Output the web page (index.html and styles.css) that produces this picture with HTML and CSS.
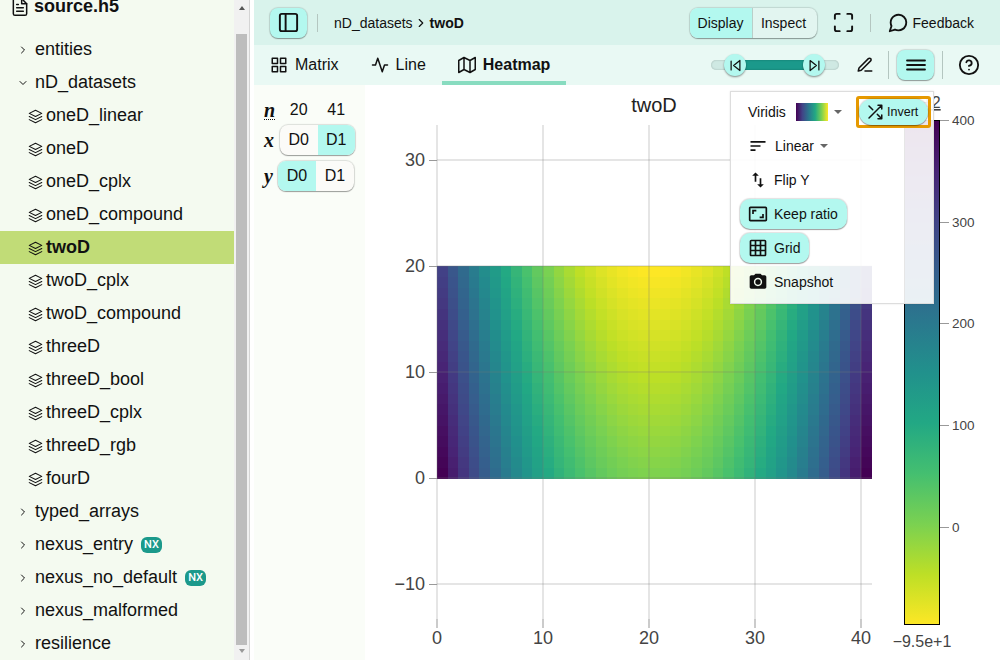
FILE: index.html
```html
<!DOCTYPE html>
<html lang="en">
<head>
    <meta charset="UTF-8">
    <title>twoD - H5Web</title>
    <link rel="stylesheet" href="styles.css">
</head>
<body>
    <!-- Icon set, reused below with <use> -->
    <svg class="icon-defs" aria-hidden="true">
        <symbol id="i-file" viewBox="0 0 24 24"><path d="M14 2H6a2 2 0 0 0-2 2v16a2 2 0 0 0 2 2h12a2 2 0 0 0 2-2V8z"/><path d="M14 2v6h6M16 13H8M16 17H8M10 9H8"/></symbol>
        <symbol id="i-right" viewBox="0 0 24 24"><path d="M9 18l6-6-6-6"/></symbol>
        <symbol id="i-down" viewBox="0 0 24 24"><path d="M6 9l6 6 6-6"/></symbol>
        <symbol id="i-layers" viewBox="0 0 24 24"><path d="M12 2L2 7l10 5 10-5-10-5zM2 17l10 5 10-5M2 12l10 5 10-5"/></symbol>
        <symbol id="i-sidebar" viewBox="0 0 24 24"><rect x="3" y="3" width="18" height="18" rx="2"/><path d="M9 3v18"/></symbol>
        <symbol id="i-grid" viewBox="0 0 24 24"><path d="M3 3h7v7H3zM14 3h7v7h-7zM14 14h7v7h-7zM3 14h7v7H3z"/></symbol>
        <symbol id="i-line" viewBox="0 0 24 24"><path d="M22 12h-4l-3 9-6-18-3 9H2"/></symbol>
        <symbol id="i-map" viewBox="0 0 24 24"><path d="M1 6v16l7-4 8 4 7-4V2l-7 4-8-4-7 4zM8 2v16M16 6v16"/></symbol>
        <symbol id="i-maximize" viewBox="0 0 24 24"><path d="M8 3H5a2 2 0 0 0-2 2v3m18 0V5a2 2 0 0 0-2-2h-3m0 18h3a2 2 0 0 0 2-2v-3M3 16v3a2 2 0 0 0 2 2h3"/></symbol>
        <symbol id="i-message" viewBox="0 0 24 24"><path d="M21 11.5a8.38 8.38 0 0 1-.9 3.8 8.5 8.5 0 0 1-7.6 4.7 8.38 8.38 0 0 1-3.8-.9L3 21l1.9-5.7a8.38 8.38 0 0 1-.9-3.8 8.5 8.5 0 0 1 4.7-7.6 8.38 8.38 0 0 1 3.8-.9h.5a8.48 8.48 0 0 1 8 8v.5z"/></symbol>
        <symbol id="i-back" viewBox="0 0 24 24"><path d="M19 20L9 12l10-8v16zM5 19V5"/></symbol>
        <symbol id="i-forward" viewBox="0 0 24 24"><path d="M5 4l10 8-10 8V4zM19 5v14"/></symbol>
        <symbol id="i-pen" viewBox="0 0 24 24"><path d="M12 20h9M16.5 3.5a2.121 2.121 0 0 1 3 3L7 19l-4 1 1-4L16.5 3.5z"/></symbol>
        <symbol id="i-menu" viewBox="0 0 24 24"><path d="M2.2 7.1h19.6M2.2 12h19.6M2.2 16.9h19.6"/></symbol>
        <symbol id="i-help" viewBox="0 0 24 24"><circle cx="12" cy="12" r="10"/><path d="M9.09 9a3 3 0 0 1 5.83 1c0 2-3 3-3 3M12 17h.01"/></symbol>
        <symbol id="i-shuffle" viewBox="0 0 24 24"><path d="M16 3h5v5M4 20L21 3M21 16v5h-5M15 15l6 6M4 4l5 5"/></symbol>
        <symbol id="i-sort" viewBox="0 0 24 24"><path class="solid" d="M3 18h6v-2H3v2zM3 6v2h18V6H3zm0 7h12v-2H3v2z"/></symbol>
        <symbol id="i-swap" viewBox="0 0 24 24"><path class="solid" d="M16 17.01V10h-2v7.01h-3L15 21l4-3.99h-3zM9 3L5 6.99h3V14h2V6.99h3L9 3z"/></symbol>
        <symbol id="i-ratio" viewBox="0 0 24 24"><path class="solid" d="M19 12h-2v3h-3v2h5v-5zM7 9h3V7H5v5h2V9zm14-6H3c-1.1 0-2 .9-2 2v14c0 1.1.9 2 2 2h18c1.1 0 2-.9 2-2V5c0-1.1-.9-2-2-2zm0 16.01H3V4.99h18v14.02z"/></symbol>
        <symbol id="i-gridon" viewBox="0 0 24 24"><path class="solid" d="M20 2H4c-1.1 0-2 .9-2 2v16c0 1.1.9 2 2 2h16c1.1 0 2-.9 2-2V4c0-1.1-.9-2-2-2zM8 20H4v-4h4v4zm0-6H4v-4h4v4zm0-6H4V4h4v4zm6 12h-4v-4h4v4zm0-6h-4v-4h4v4zm0-6h-4V4h4v4zm6 12h-4v-4h4v4zm0-6h-4v-4h4v4zm0-6h-4V4h4v4z"/></symbol>
        <symbol id="i-camera" viewBox="0 0 24 24"><circle class="solid" cx="12" cy="12" r="3.2"/><path class="solid" d="M9 2L7.17 4H4c-1.1 0-2 .9-2 2v12c0 1.1.9 2 2 2h16c1.1 0 2-.9 2-2V6c0-1.1-.9-2-2-2h-3.17L15 2H9zm3 15c-2.76 0-5-2.24-5-5s2.24-5 5-5 5 2.24 5 5-2.24 5-5 5z"/></symbol>
    </svg>

    <aside class="sidebar">
        <div class="tree-root"><svg class="icon root-icon"><use href="#i-file"/></svg>source.h5</div>
        <div class="tree-row"><svg class="icon chevron"><use href="#i-right"/></svg>entities</div>
        <div class="tree-row"><svg class="icon chevron"><use href="#i-down"/></svg>nD_datasets</div>
        <div class="tree-row leaf"><svg class="icon layers"><use href="#i-layers"/></svg>oneD_linear</div>
        <div class="tree-row leaf"><svg class="icon layers"><use href="#i-layers"/></svg>oneD</div>
        <div class="tree-row leaf"><svg class="icon layers"><use href="#i-layers"/></svg>oneD_cplx</div>
        <div class="tree-row leaf"><svg class="icon layers"><use href="#i-layers"/></svg>oneD_compound</div>
        <div class="tree-row leaf selected"><svg class="icon layers"><use href="#i-layers"/></svg>twoD</div>
        <div class="tree-row leaf"><svg class="icon layers"><use href="#i-layers"/></svg>twoD_cplx</div>
        <div class="tree-row leaf"><svg class="icon layers"><use href="#i-layers"/></svg>twoD_compound</div>
        <div class="tree-row leaf"><svg class="icon layers"><use href="#i-layers"/></svg>threeD</div>
        <div class="tree-row leaf"><svg class="icon layers"><use href="#i-layers"/></svg>threeD_bool</div>
        <div class="tree-row leaf"><svg class="icon layers"><use href="#i-layers"/></svg>threeD_cplx</div>
        <div class="tree-row leaf"><svg class="icon layers"><use href="#i-layers"/></svg>threeD_rgb</div>
        <div class="tree-row leaf"><svg class="icon layers"><use href="#i-layers"/></svg>fourD</div>
        <div class="tree-row"><svg class="icon chevron"><use href="#i-right"/></svg>typed_arrays</div>
        <div class="tree-row"><svg class="icon chevron"><use href="#i-right"/></svg>nexus_entry<span class="badge">NX</span></div>
        <div class="tree-row"><svg class="icon chevron"><use href="#i-right"/></svg>nexus_no_default<span class="badge">NX</span></div>
        <div class="tree-row"><svg class="icon chevron"><use href="#i-right"/></svg>nexus_malformed</div>
        <div class="tree-row"><svg class="icon chevron"><use href="#i-right"/></svg>resilience</div>
    </aside>

    <div class="scrollbar">
        <span class="arrow-up"></span>
        <span class="thumb"></span>
        <span class="arrow-down"></span>
    </div>
    <div class="gutter"></div>

    <main class="main">
        <header class="topbar">
            <button class="btn active square"><svg class="icon icon-23"><use href="#i-sidebar"/></svg></button>
            <span class="sep"></span>
            <span class="crumb">nD_datasets</span>
            <svg class="icon crumb-arrow"><use href="#i-right"/></svg>
            <strong class="crumb">twoD</strong>
            <span class="spacer"></span>
            <div class="btn-group">
                <button class="seg active">Display</button>
                <button class="seg">Inspect</button>
            </div>
            <svg class="icon icon-23 fullscreen"><use href="#i-maximize"/></svg>
            <span class="sep"></span>
            <span class="feedback"><svg class="icon icon-22"><use href="#i-message"/></svg>Feedback</span>
        </header>

        <nav class="toolbar">
            <span class="tab"><svg class="icon icon-18"><use href="#i-grid"/></svg>Matrix</span>
            <span class="tab"><svg class="icon icon-18"><use href="#i-line"/></svg>Line</span>
            <span class="tab current"><svg class="icon icon-18"><use href="#i-map"/></svg>Heatmap</span>
            <span class="spacer"></span>
            <div class="slider">
                <span class="slider-fill"></span>
                <span class="slider-thumb left"><svg class="icon icon-15"><use href="#i-back"/></svg></span>
                <span class="slider-thumb right"><svg class="icon icon-15"><use href="#i-forward"/></svg></span>
            </div>
            <svg class="icon icon-18 pen"><use href="#i-pen"/></svg>
            <span class="sep tall"></span>
            <button class="btn active square"><svg class="icon icon-22"><use href="#i-menu"/></svg></button>
            <span class="sep tall"></span>
            <svg class="icon icon-22 help"><use href="#i-help"/></svg>
        </nav>

        <section class="content">
            <div class="dims">
                <div class="dim-row counts">
                    <em class="dim-label dotted">n</em>
                    <span class="count">20</span>
                    <span class="count">41</span>
                </div>
                <div class="dim-row">
                    <em class="dim-label">x</em>
                    <div class="dim-toggle">
                        <span class="dim-btn">D0</span>
                        <span class="dim-btn on">D1</span>
                    </div>
                </div>
                <div class="dim-row y-row">
                    <em class="dim-label">y</em>
                    <div class="dim-toggle">
                        <span class="dim-btn on">D0</span>
                        <span class="dim-btn">D1</span>
                    </div>
                </div>
            </div>

            <div class="plot">
                <svg class="chart" viewBox="365 85 635 575" width="635" height="575">
                    <defs>
                        <linearGradient id="viridis-bar" x1="0" y1="0" x2="0" y2="1">
                            <stop offset="0" stop-color="#440154"/>
                            <stop offset="0.1" stop-color="#482475"/>
                            <stop offset="0.2" stop-color="#414487"/>
                            <stop offset="0.3" stop-color="#355f8d"/>
                            <stop offset="0.4" stop-color="#2a788e"/>
                            <stop offset="0.5" stop-color="#21918c"/>
                            <stop offset="0.6" stop-color="#22a884"/>
                            <stop offset="0.7" stop-color="#44bf70"/>
                            <stop offset="0.8" stop-color="#7ad151"/>
                            <stop offset="0.9" stop-color="#bddf26"/>
                            <stop offset="1" stop-color="#fde725"/>
                        </linearGradient>
                    </defs>

                    <text class="plot-title" x="654" y="112">twoD</text>

                    <!-- script.js puts the heatmap cells in here -->
                    <g id="heatmap" shape-rendering="crispEdges"></g>

                    <g class="grid">
                        <path d="M437 125V619M543 125V619M649 125V619M755 125V619M861 125V619"/>
                        <path d="M437 160H872M437 266H872M437 372H872M437 478H872M437 584H872"/>
                    </g>
                    <g class="ticks" shape-rendering="crispEdges">
                        <path d="M429 160H437M429 266H437M429 372H437M429 478H437M429 584H437"/>
                    </g>
                    <g class="ticks soft">
                        <path d="M437 619V628M543 619V628M649 619V628M755 619V628M861 619V628"/>
                    </g>
                    <g class="axis-y">
                        <text x="425" y="166">30</text>
                        <text x="425" y="272">20</text>
                        <text x="425" y="378">10</text>
                        <text x="425" y="484">0</text>
                        <text x="425" y="590">−10</text>
                    </g>
                    <g class="axis-x">
                        <text x="437" y="644">0</text>
                        <text x="543" y="644">10</text>
                        <text x="649" y="644">20</text>
                        <text x="755" y="644">30</text>
                        <text x="861" y="644">40</text>
                    </g>

                    <rect class="bar" x="904.5" y="120.5" width="35" height="504" fill="url(#viridis-bar)"/>
                    <g class="ticks" shape-rendering="crispEdges">
                        <path d="M940 120H949M940 222H949M940 323H949M940 425H949M940 527H949"/>
                    </g>
                    <g class="bar-labels">
                        <text x="952" y="125">400</text>
                        <text x="952" y="227">300</text>
                        <text x="952" y="328">200</text>
                        <text x="952" y="430">100</text>
                        <text x="952" y="532">0</text>
                    </g>
                    <text class="bar-limit underlined" x="916" y="108">4.0e+2</text>
                    <text class="bar-limit" x="922" y="647">−9.5e+1</text>
                </svg>

                <div class="menu">
                    <div class="menu-row first">
                        <span class="cmap-name">Viridis</span>
                        <span class="cmap-swatch"></span>
                        <span class="caret"></span>
                        <span class="invert-ring">
                            <button class="pill invert"><svg class="icon icon-18"><use href="#i-shuffle"/></svg>Invert</button>
                        </span>
                    </div>
                    <div class="menu-row linear"><svg class="icon icon-20"><use href="#i-sort"/></svg>Linear<span class="caret"></span></div>
                    <div class="menu-row"><svg class="icon icon-20"><use href="#i-swap"/></svg>Flip Y</div>
                    <div class="menu-row"><button class="pill"><svg class="icon icon-20"><use href="#i-ratio"/></svg>Keep ratio</button></div>
                    <div class="menu-row"><button class="pill"><svg class="icon icon-20"><use href="#i-gridon"/></svg>Grid</button></div>
                    <div class="menu-row"><svg class="icon icon-20"><use href="#i-camera"/></svg>Snapshot</div>
                </div>
            </div>
        </section>
    </main>

    <script src="script.js"></script>
</body>
</html>
```

FILE: styles.css
```css
* {
    box-sizing: border-box;
}

html, body {
    height: 100%;
}

body {
    margin: 0;
    display: flex;
    height: 660px;
    overflow: hidden;
    font-family: "Liberation Sans", Arial, sans-serif;
    color: #111;
    background: #fff;
}

.icon-defs {
    position: absolute;
    width: 0;
    height: 0;
}

/* Icons */
.icon {
    flex: none;
    fill: none;
    stroke: currentColor;
    stroke-width: 2;
    stroke-linecap: round;
    stroke-linejoin: round;
}

.solid {
    fill: currentColor;
    stroke: none;
}

.icon-15 { width: 15px; height: 15px; }
.icon-18 { width: 18px; height: 18px; }
.icon-20 { width: 20px; height: 20px; }
.icon-22 { width: 22px; height: 22px; }
.icon-23 { width: 23px; height: 23px; }

/* Sidebar tree */
.sidebar {
    width: 234px;
    flex: none;
    overflow: hidden;
    background: #f4faf0;
    font-size: 18px;
}

.tree-root {
    display: flex;
    align-items: center;
    height: 33px;
    margin: -10px 0 10px;
    padding-left: 10px;
    font-weight: bold;
}

.root-icon {
    width: 20px;
    height: 20px;
    margin-right: 4px;
    stroke-width: 1.8;
}

.tree-row {
    display: flex;
    align-items: center;
    height: 33px;
    padding-left: 17px;
    white-space: nowrap;
}

.chevron {
    width: 12px;
    height: 12px;
    margin-right: 6px;
}

.tree-row.leaf {
    padding-left: 28px;
}

.layers {
    width: 15px;
    height: 15px;
    margin-right: 3px;
    margin-top: 2px;
    stroke-width: 1.7;
}

.tree-row.selected {
    background: #c1dc77;
    font-weight: bold;
}

.badge {
    margin-left: 8px;
    padding: 0 3px;
    height: 16px;
    line-height: 16px;
    border-radius: 6px;
    background: #1b998b;
    color: #fff;
    font-family: Roboto, sans-serif;
    font-size: 11px;
    font-weight: 500;
}

/* Scrollbar and resize gutter */
.scrollbar {
    width: 15px;
    flex: none;
    display: flex;
    flex-direction: column;
    align-items: center;
    background: #f1f1f1;
}

.arrow-up, .arrow-down {
    width: 0;
    height: 0;
    border-left: 3.5px solid transparent;
    border-right: 3.5px solid transparent;
}

.arrow-up {
    margin-top: 6px;
    border-bottom: 4px solid #555;
}

.arrow-down {
    margin-top: 4px;
    border-top: 4px solid #999;
}

.thumb {
    width: 11px;
    height: 611px;
    margin-top: 24px;
    background: #bdbdbd;
}

.gutter {
    width: 5px;
    flex: none;
    background: #fff;
    border-left: 1px solid #d4d4d4;
}

/* Main column */
.main {
    flex: 1;
    min-width: 0;
    display: flex;
    flex-direction: column;
}

.topbar {
    display: flex;
    align-items: center;
    height: 45px;
    padding: 0 26px 0 16px;
    background: #d9f3ec;
    font-size: 14px;
}

.toolbar {
    display: flex;
    align-items: center;
    height: 40px;
    background: #e9f9f4;
    padding-right: 20px;
}

.spacer {
    flex: 1;
}

.sep {
    width: 1px;
    height: 18px;
    margin: 0 16px 0 10px;
    background: #b4c6c0;
}

.sep.tall {
    height: 28px;
    margin: 0 8px;
}

.btn {
    display: flex;
    align-items: center;
    justify-content: center;
    padding: 0;
    border: none;
    border-radius: 8px;
    color: #111;
    font: inherit;
}

.btn.active, .seg.active {
    background: #b3f8ef;
}

.btn.square {
    width: 37px;
    height: 30px;
    box-shadow: 0 1px 1px rgba(0, 0, 0, 0.3), 0 0 1px 1px rgba(0, 0, 0, 0.12);
}

.crumb {
    font-size: 14px;
}

.crumb-arrow {
    width: 14px;
    height: 14px;
    margin: 0 1.5px;
}

.btn-group {
    display: flex;
    height: 30px;
    border-radius: 8px;
    overflow: hidden;
    box-shadow: 0 1px 1px rgba(0, 0, 0, 0.3), 0 0 1px 1px rgba(0, 0, 0, 0.12);
    margin-right: 15px;
    background: #e2f5f0;
}

.seg {
    padding: 0 9px 0 7px;
    border: none;
    border-right: 1px solid #b9cfc9;
    background: transparent;
    color: #111;
    font: inherit;
}

.seg:first-child {
    width: 63px;
    padding: 0;
}

.seg:last-child {
    border-right: none;
    width: 64px;
}

.fullscreen + .sep {
    margin: 0 16px 0 15px;
}

.feedback {
    display: flex;
    align-items: center;
    gap: 4px;
    font-size: 14px;
}

/* View tabs */
.tab {
    position: relative;
    display: flex;
    align-items: center;
    gap: 7px;
    height: 40px;
    padding: 0 16px;
    font-size: 16px;
}

.tab.current {
    font-weight: bold;
}

.tab.current::after {
    content: "";
    position: absolute;
    left: 0;
    right: 0;
    bottom: 0;
    height: 4px;
    background: #88dcc0;
}

/* Domain slider */
.slider {
    position: relative;
    width: 128px;
    height: 10px;
    margin-right: 17px;
    border-radius: 5px;
    background: #cfe9e3;
    box-shadow: inset 0 0 2px rgba(0, 0, 0, 0.25);
}

.slider-fill {
    position: absolute;
    left: 24px;
    width: 79px;
    top: 0;
    bottom: 0;
    background: #1b998b;
    box-shadow: inset 0 0 2px rgba(0, 0, 0, 0.3);
}

.slider-thumb {
    position: absolute;
    top: -6px;
    width: 22px;
    height: 22px;
    display: flex;
    align-items: center;
    justify-content: center;
    border-radius: 50%;
    background: #b3f8ef;
    box-shadow: 0 1px 2px rgba(0, 0, 0, 0.45);
}

.slider-thumb.left { left: 13px; }
.slider-thumb.right { left: 92px; }

.pen {
    margin-right: 6px;
}

.help {
    margin-left: 7px;
}

/* Dimension mapper */
.content {
    flex: 1;
    display: flex;
    min-height: 0;
}

.dims {
    width: 111px;
    flex: none;
    padding: 10px 10px 0;
    background: #fafdf8;
    font-size: 16px;
}

.dim-row {
    display: flex;
    align-items: center;
    height: 30px;
    margin-bottom: 6px;
}

.dim-row.counts {
    margin-bottom: 0;
}

.dim-label {
    width: 16px;
    flex: none;
    font-family: "Liberation Serif", serif;
    font-size: 20px;
    font-weight: bold;
}

.dim-label.dotted {
    width: 11px;
    margin-right: 5px;
    line-height: 18px;
    border-bottom: 1px dotted #111;
}

.count {
    width: 38px;
    text-align: center;
}

.dim-toggle {
    display: flex;
    height: 30px;
    border-radius: 8px;
    overflow: hidden;
    background: #fbfbf8;
    box-shadow: 0 1px 1px rgba(0, 0, 0, 0.3), 0 0 1px 1px rgba(0, 0, 0, 0.12);
}

.y-row .dim-toggle {
    margin-left: -2px;
}

.dim-btn {
    display: flex;
    align-items: center;
    justify-content: center;
    width: 38px;
}

.dim-btn.on {
    background: #b3f8ef;
}

/* Plot */
.plot {
    position: relative;
    flex: 1;
    min-width: 0;
    background: #fff;
}

.chart {
    display: block;
}

.plot-title {
    font-size: 20px;
    fill: #222;
    text-anchor: middle;
}

.grid path {
    fill: none;
    stroke: rgba(120, 120, 120, 0.25);
    stroke-width: 1.5;
}

.ticks path {
    fill: none;
    stroke: #999;
}

.ticks.soft path {
    stroke: #bbb;
    stroke-width: 1.5;
}

.axis-y text, .axis-x text {
    font-size: 18px;
    fill: #444;
}

.axis-y text {
    text-anchor: end;
}

.axis-x text, .bar-limit {
    text-anchor: middle;
}

.bar {
    stroke: #000;
}

.bar-labels text {
    font-size: 13.5px;
    fill: #444;
}

.bar-limit {
    font-size: 16px;
    fill: #444;
}

.underlined {
    text-decoration: underline;
}

/* Options menu over the plot */
.menu {
    position: absolute;
    top: 6px;
    left: 365px;
    width: 204px;
    height: 213px;
    padding: 3px 8px 3px 9px;
    background: rgba(255, 255, 255, 0.9);
    border: 1px solid #ddd;
    box-shadow: 0 0 2px rgba(0, 0, 0, 0.1);
    font-size: 14px;
}

.menu-row {
    display: flex;
    align-items: center;
    gap: 6px;
    height: 34px;
    padding-left: 8px;
}

.menu-row:has(.pill) {
    padding-left: 0;
}

.menu-row.first {
    padding-left: 8px;
    gap: 0;
}

.menu-row.linear {
    gap: 7px;
}

.cmap-name {
    width: 48px;
    flex: none;
}

.cmap-swatch {
    width: 32px;
    height: 18px;
    flex: none;
    background: linear-gradient(to right, #440154, #414487, #2a788e, #22a884, #7ad151, #fde725);
}

.caret {
    width: 0;
    height: 0;
    flex: none;
    margin-left: 6px;
    border-left: 4px solid transparent;
    border-right: 4px solid transparent;
    border-top: 4px solid #666;
}

.linear .caret {
    margin-left: -1px;
}

.invert-ring {
    flex: none;
    margin-left: 14px;
    border: 3px solid #e69900;
    border-radius: 3px;
}

.pill {
    display: flex;
    align-items: center;
    gap: 6px;
    height: 30px;
    padding: 0 9px 0 8px;
    border: none;
    border-radius: 10px;
    background: #b3f8ef;
    color: #111;
    font: inherit;
    box-shadow: 0 1px 1px rgba(0, 0, 0, 0.3), 0 0 1px 1px rgba(0, 0, 0, 0.12);
}

.pill.invert {
    height: 26px;
    padding: 0 10px 0 7px;
    border-radius: 13px;
    font-size: 12.5px;
    gap: 3px;
}
```

FILE: script.js
```js
// Viridis, reversed through t = (max - v) / (max - min)
const stops = ["#440154", "#482475", "#414487", "#355f8d", "#2a788e", "#21918c", "#22a884", "#44bf70", "#7ad151", "#bddf26", "#fde725"]
    .map(hex => [1, 3, 5].map(i => parseInt(hex.slice(i, i + 2), 16)));

function viridis(t) {
    const pos = Math.min(Math.max(t, 0), 1) * (stops.length - 1);
    const low = Math.min(Math.floor(pos), stops.length - 2);
    const mix = pos - low;
    const rgb = stops[low].map((c, i) => Math.round(c + (stops[low + 1][i] - c) * mix));
    return `rgb(${rgb.join(",")})`;
}

const heatmap = document.getElementById("heatmap");
const cell = 10.6;

for (let row = 0; row < 20; row++) {
    for (let col = 0; col < 41; col++) {
        const value = (col - 20) ** 2 - 5 * row;
        const rect = document.createElementNS("http://www.w3.org/2000/svg", "rect");
        rect.setAttribute("x", 437 + col * cell);
        rect.setAttribute("y", 478 - (row + 1) * cell);
        rect.setAttribute("width", cell + 0.5);
        rect.setAttribute("height", cell + 0.5);
        rect.setAttribute("fill", viridis((400 - value) / 495));
        heatmap.appendChild(rect);
    }
}
```
